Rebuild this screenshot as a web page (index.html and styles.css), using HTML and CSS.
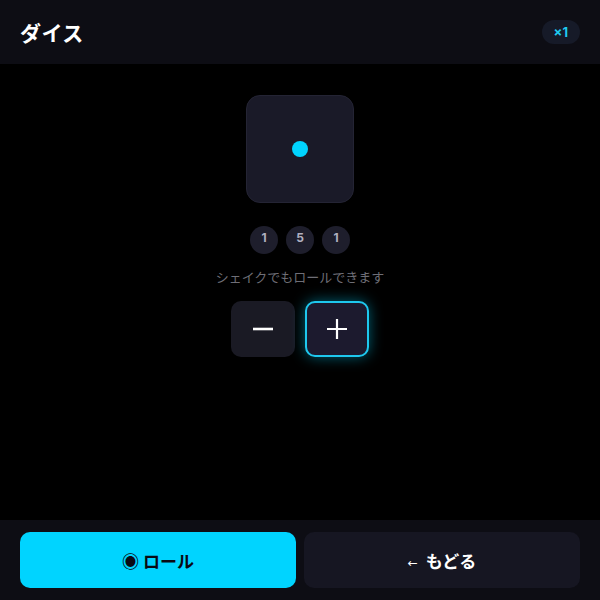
FILE: index.html
```html
<!DOCTYPE html>
<html lang="ja">
<head>
<meta charset="utf-8">
<link rel="stylesheet" href="styles.css">
</head>
<body>
<div class="app">
  <header class="header">
    <h1 class="title">ダイス</h1>
    <span class="badge">×1</span>
  </header>
  <main class="main">
    <div class="die"><span class="pip"></span></div>
    <div class="history">
      <span class="chip">1</span>
      <span class="chip">5</span>
      <span class="chip">1</span>
    </div>
    <p class="hint">シェイクでもロールできます</p>
    <div class="controls">
      <button class="ctrl">
        <svg width="22" height="22" viewBox="0 0 22 22"><path d="M1 11H21" stroke="#fff" stroke-width="2.6"/></svg>
      </button>
      <button class="ctrl active">
        <svg width="22" height="22" viewBox="0 0 22 22"><path d="M1 11H21M11 1V21" stroke="#fff" stroke-width="2.2"/></svg>
      </button>
    </div>
  </main>
  <footer class="footer">
    <button class="btn primary">◉ ロール</button>
    <button class="btn secondary"><span class="arrow">←</span>もどる</button>
  </footer>
</div>
</body>
</html>
```
FILE: styles.css
```css
* { box-sizing: border-box; }
html, body { margin: 0; padding: 0; background: #000; }
body {
  font-family: "Noto Sans CJK JP", "Noto Sans", sans-serif;
  color: #fff;
}
.app {
  width: 600px;
  height: 600px;
  display: flex;
  flex-direction: column;
}
.header {
  height: 64px;
  background: #0d0d14;
  display: flex;
  align-items: center;
  justify-content: space-between;
  padding: 0 20px;
}
.title {
  margin: 0;
  font-size: 21px;
  font-weight: 700;
  letter-spacing: 0.5px;
}
.badge {
  background: #161a28;
  color: #1ecbf0;
  font-family: Inter, "Noto Sans", sans-serif;
  font-weight: 700;
  font-size: 13px;
  height: 24px;
  line-height: 24px;
  padding: 0 12px;
  border-radius: 12px;
  margin-top: -1px;
}
.main {
  flex: 1;
  display: flex;
  flex-direction: column;
  align-items: center;
  padding-top: 31px;
}
.die {
  width: 108px;
  height: 108px;
  background: #1a1a28;
  border: 1px solid #242434;
  border-radius: 14px;
  display: flex;
  align-items: center;
  justify-content: center;
}
.pip {
  width: 16px;
  height: 16px;
  border-radius: 50%;
  background: #00d4ff;
}
.history {
  display: flex;
  gap: 8px;
  margin-top: 23px;
}
.chip {
  width: 28px;
  height: 28px;
  border-radius: 50%;
  background: #1e1e2c;
  color: #b0b0c0;
  font-family: Inter, "Noto Sans", sans-serif;
  font-weight: 700;
  font-size: 12px;
  display: flex;
  align-items: center;
  justify-content: center;
  padding-bottom: 5px;
}
.hint {
  margin: 14px 0 0;
  font-size: 13px;
  color: #6e6e76;
  line-height: 18px;
}
.controls {
  display: flex;
  gap: 10px;
  margin-top: 15px;
}
.ctrl {
  width: 64px;
  height: 56px;
  border-radius: 10px;
  background: #1a1a24;
  border: none;
  display: flex;
  align-items: center;
  justify-content: center;
  padding: 0;
}
.ctrl.active {
  background: #1c1a2e;
  border: 2px solid #1ec8ee;
  box-shadow: 0 0 14px rgba(0, 212, 255, 0.45);
}
.footer {
  height: 80px;
  background: #0d0d14;
  display: flex;
  gap: 8px;
  padding: 12px 20px;
}
.btn {
  flex: 1;
  height: 56px;
  border: none;
  border-radius: 10px;
  font-family: "Noto Sans CJK JP", "Noto Sans", sans-serif;
  font-weight: 700;
  font-size: 17px;
}
.arrow {
  font-family: "DejaVu Sans", sans-serif;
  font-weight: 400;
  font-size: 12px;
  vertical-align: 1px;
  margin-right: 8px;
}
.primary { background: #00d4ff; color: #0a0a14; }
.secondary { background: #161622; color: #fff; }
```
